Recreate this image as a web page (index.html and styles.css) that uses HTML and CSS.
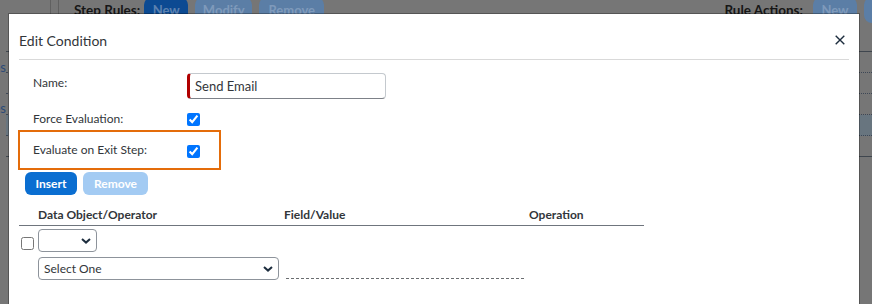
FILE: index.html
```html
<!DOCTYPE html>
<html lang="en">
<head>
<meta charset="utf-8">
<title>Edit Condition</title>
<link rel="stylesheet" href="styles.css">
</head>
<body>
<div class="page">
  <div class="toolbar">
    <div class="tb-rail"></div>
    <div class="tb-rail2"></div>
    <div class="tb-group left">
      <span class="tb-label">Step Rules:</span>
      <button class="tb-btn primary w-new">New</button>
      <button class="tb-btn w-modify">Modify</button>
      <button class="tb-btn w-remove">Remove</button>
    </div>
    <div class="tb-group right">
      <span class="tb-label">Rule Actions:</span>
      <button class="tb-btn w-new">New</button>
      <button class="tb-btn w-modify">Modify</button>
    </div>
  </div>
  <div class="content">
    <nav class="nav">
      <span class="nav-item">Steps</span>
      <span class="nav-item">Rules</span>
    </nav>
    <div class="grid">
      <div class="grid-head"></div>
      <div class="grid-row"></div>
      <div class="grid-row"></div>
      <div class="grid-row"></div>
      <div class="grid-row selected"></div>
      <div class="grid-row last"></div>
    </div>
  </div>
</div>

<div class="dialog">
  <div class="dlg-header">
    <span class="dlg-title">Edit Condition</span>
    <button class="dlg-close" aria-label="Close">
      <svg width="10" height="10" viewBox="0 0 10 10"><path d="M0.7 0.7 L9.3 9.3 M9.3 0.7 L0.7 9.3" stroke="#1d2d3e" stroke-width="1.4" fill="none"/></svg>
    </button>
  </div>
  <div class="dlg-body">
    <div class="form-row name-row">
      <label class="form-label">Name:</label>
      <div class="text-input">Send Email</div>
    </div>
    <div class="form-row check-row">
      <label class="form-label">Force Evaluation:</label>
      <input type="checkbox" class="cb" checked>
    </div>
    <div class="form-row check-row highlight">
      <label class="form-label">Evaluate on Exit Step:</label>
      <input type="checkbox" class="cb" checked>
    </div>
    <div class="actions">
      <button class="btn btn-primary">Insert</button>
      <button class="btn btn-disabled">Remove</button>
    </div>
    <div class="cond-table">
      <div class="th"></div>
      <div class="th">Data Object/Operator</div>
      <div class="th">Field/Value</div>
      <div class="th">Operation</div>

      <div class="td td-check"><input type="checkbox" class="cb"></div>
      <div class="td td-stack">
        <div class="select select-small">
          <span class="select-text"></span>
          <svg class="chev" width="10" height="6" viewBox="0 0 10 6"><path d="M1 1 L5 4.6 L9 1" stroke="#1d2d3e" stroke-width="2" fill="none"/></svg>
        </div>
        <div class="select select-wide">
          <span class="select-text">Select One</span>
          <svg class="chev" width="10" height="6" viewBox="0 0 10 6"><path d="M1 1 L5 4.6 L9 1" stroke="#1d2d3e" stroke-width="2" fill="none"/></svg>
        </div>
      </div>
      <div class="td td-field"><div class="dashed-field"></div></div>
      <div class="td"></div>
    </div>
  </div>
</div>
</body>
</html>
```

FILE: styles.css
```css
* { box-sizing: border-box; }

html, body {
  margin: 0;
  height: 100%;
  overflow: hidden;
}

body {
  background: #767676;
  font-family: Lato, "Liberation Sans", sans-serif;
  color: #32363a;
  position: relative;
}

/* ---------- dimmed background page ---------- */
.page { width: 930px; }

.toolbar {
  display: flex;
  align-items: flex-start;
  height: 28px;
  margin-top: -3px;
  padding-right: 9px;
}
.tb-rail { width: 51px; height: 100%; border-right: 1px solid #606060; }
.tb-rail2 { width: 8px; height: 100%; border-right: 1px solid #606060; }

.tb-group { display: flex; align-items: center; gap: 7px; }
.tb-group.left { margin-left: 15px; }
.tb-group.right { margin-left: auto; }
.tb-group.right .tb-label { margin-right: 3px; }

.tb-label {
  font-weight: 700;
  font-size: 13.5px;
  color: #161616;
  margin-right: -3px;
}
.tb-btn {
  height: 26px;
  border: 0;
  border-radius: 8px;
  padding: 0;
  font: 700 13px Lato, "Liberation Sans", sans-serif;
  background: #5b7ea6;
  color: #7f9abb;
}
.tb-btn.primary { background: #0c4a92; color: #5d82b0; }
.w-new { width: 44px; }
.w-modify { width: 57px; }
.w-remove { width: 65px; }

.content { display: flex; }
.nav {
  width: 6px;
  display: flex;
  flex-direction: column;
  align-items: flex-end;
  overflow: hidden;
  padding-top: 34px;
  gap: 25px;
}
.nav-item {
  font-size: 13px;
  line-height: 16px;
  color: #2b4a78;
  white-space: nowrap;
}
.grid { flex: 1; }
.grid-head { height: 27px; border-bottom: 1px solid #3f464e; }
.grid-row { height: 21px; border-bottom: 1px dotted #3d4756; }
.grid-row.selected { background: #68757f; }
.grid-row.last { border-bottom: 1px solid #3f464e; }

/* ---------- dialog ---------- */
.dialog {
  position: absolute;
  left: 9px;
  top: 14px;
  width: 850px;
  height: 300px;
  background: #fff;
  box-shadow: 0 0 0 1px rgba(0, 0, 0, 0.28);
}

.dlg-header {
  margin: 0 10px;
  height: 46px;
  padding-top: 7px;
  border-bottom: 1px solid #d9d9d9;
  display: flex;
  align-items: center;
  justify-content: space-between;
}
.dlg-title { font-size: 14px; color: #32363a; }
.dlg-close {
  border: 0;
  background: none;
  padding: 0;
  margin-right: 4px;
  width: 10px;
  height: 10px;
  display: flex;
}

.dlg-body { padding-left: 9px; }

.form-row {
  display: flex;
  align-items: center;
  padding-left: 15px;
}
.form-label {
  width: 154px;
  flex: none;
  font-size: 12px;
  line-height: 16px;
  color: #32363a;
}
.name-row { margin-top: 13px; align-items: flex-start; }
.name-row .form-label { padding-top: 2px; }

.text-input {
  width: 199px;
  height: 26px;
  border: 1px solid #c4c9ce;
  border-bottom-color: #7d8188;
  border-left: 3px solid #b00000;
  border-radius: 4px;
  padding-left: 5px;
  font-size: 13px;
  line-height: 24px;
  color: #32363a;
}

.check-row { height: 22px; margin-top: 9px; }
.cb { margin: 1px 0 0 0; width: 13px; height: 13px; }

.form-row.highlight {
  margin-top: 0;
  width: 203px;
  height: 40px;
  border: 2px solid #e46c0a;
  padding-left: 13px;
}
.highlight .cb { margin-top: 3px; }

.actions {
  display: flex;
  gap: 6px;
  margin: 2px 0 0 7px;
}
.btn {
  height: 23px;
  border: 0;
  border-radius: 6px;
  font: 700 12px Lato, "Liberation Sans", sans-serif;
  color: #fff;
  padding: 0;
}
.btn-primary { width: 52px; background: #0a6ed1; }
.btn-disabled { width: 65px; background: #a3cbf3; }

.cond-table {
  display: grid;
  grid-template-columns: 19px 246px 245px 115px;
  margin: 10px 0 0 1px;
}
.th {
  height: 21px;
  font-size: 12px;
  font-weight: 700;
  line-height: 20px;
  color: #32363a;
  border-bottom: 1px solid #6f757d;
}
.td-check { padding: 8px 0 0 2px; }
.td-stack {
  display: flex;
  flex-direction: column;
  gap: 5px;
  padding-top: 3px;
}
.select {
  display: flex;
  align-items: center;
  justify-content: space-between;
  height: 23px;
  border: 1px solid #8d939b;
  border-radius: 4px;
  padding: 0 5px 0 5px;
}
.select-small { width: 59px; }
.select-wide { width: 241px; }
.select-text { font-size: 12px; color: #32363a; }
.td-field {
  display: flex;
  align-items: flex-end;
  padding: 0 0 1px 2px;
}
.dashed-field {
  width: 238px;
  height: 1px;
  background: repeating-linear-gradient(to right, #6a6d70 0 3px, transparent 3px 5px);
}
```
